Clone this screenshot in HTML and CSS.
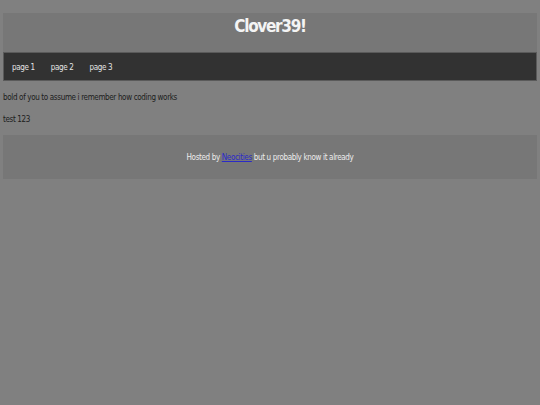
FILE: index.html
```html
<!DOCTYPE html>
<html>
<head>
<meta charset="utf-8">
<link rel="stylesheet" href="styles.css">
</head>
<body>
<div class="page">
  <header class="site-header"><h1 class="title">Clover39!</h1></header>
  <nav class="nav">
    <a class="nav-link" href="#">page 1</a>
    <a class="nav-link" href="#">page 2</a>
    <a class="nav-link" href="#">page 3</a>
  </nav>
  <main class="content">
    <p class="text">bold of you to assume i remember how coding works</p>
    <p class="text">test 123</p>
  </main>
  <footer class="site-footer">
    <p class="footer-text">Hosted by <a class="footer-link" href="#">Neocities</a> but u probably know it already</p>
  </footer>
</div>
</body>
</html>
```
FILE: styles.css
```css
html, body {
  margin: 0;
  padding: 0;
  background: #808080;
}
body {
  font-family: "DejaVu Sans Condensed", "DejaVu Sans", sans-serif;
  font-size: 8px;
  letter-spacing: -0.35px;
  color: #1c1c1c;
}
.page {
  padding: 13px 3px 0;
}
.site-header {
  height: 39px;
  box-sizing: border-box;
  padding-top: 3px;
  background: #777777;
  text-align: center;
}
.title {
  margin: 0;
  font-family: "DejaVu Sans Condensed", "DejaVu Sans", sans-serif;
  font-size: 17px;
  line-height: 20px;
  font-weight: bold;
  color: #f4f4f4;
  letter-spacing: -1.3px;
}
.nav {
  height: 27px;
  background: #323232;
  border: 1px solid #5a5a5a;
  display: flex;
  align-items: center;
  gap: 16px;
  padding-left: 8px;
}
.nav-link {
  color: #e4e4e4;
  text-decoration: none;
  position: relative;
  top: 1px;
}
.content {
  padding: 11px 0 0;
}
.text {
  margin: 0 0 10px;
  line-height: 12px;
}
.text:last-child {
  margin-bottom: 9px;
}
.site-footer {
  height: 44px;
  background: #777777;
  display: flex;
  align-items: center;
  justify-content: center;
}
.footer-text {
  margin: 0;
  color: #ececec;
}
.footer-link {
  color: #2a2ac8;
}
```
